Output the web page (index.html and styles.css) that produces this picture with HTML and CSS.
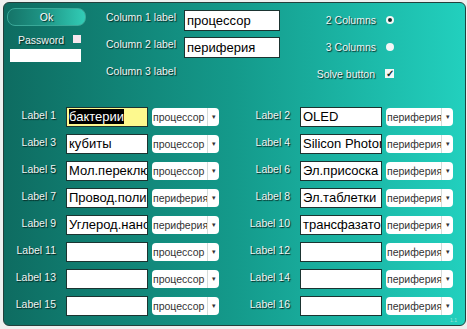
FILE: index.html
```html
<!DOCTYPE html>
<html lang="ru">
  <head>
    <meta charset="UTF-8" />
    <meta name="viewport" content="width=device-width, initial-scale=1.0" />
    <title>Solver</title>
    <link rel="stylesheet" href="styles.css">
  </head>
  <body>
    <div class="panel">
      <div class="top">
        <div class="auth">
          <button class="ok">Ok</button>
          <div class="pw-row">
            <span class="lbl">Password</span>
            <span class="pw-box"></span>
          </div>
          <div class="pw-field"></div>
        </div>

        <div class="columns">
          <div class="col-row">
            <span class="lbl">Column 1 label</span>
            <div class="field col-field">процессор</div>
          </div>
          <div class="col-row">
            <span class="lbl">Column 2 label</span>
            <div class="field col-field">периферия</div>
          </div>
          <div class="col-row">
            <span class="lbl">Column 3 label</span>
          </div>
        </div>

        <div class="options">
          <div class="opt">
            <span class="lbl">2 Columns</span>
            <span class="radio on"></span>
          </div>
          <div class="opt">
            <span class="lbl">3 Columns</span>
            <span class="radio"></span>
          </div>
          <div class="opt">
            <span class="lbl">Solve button</span>
            <span class="check">&#10003;</span>
          </div>
        </div>
      </div>

      <div class="grid">
        <div class="row"><span class="lbl">Label 1</span><div class="field hl"><span class="sel">бактерии</span></div><div class="combo"><span class="combo-text">процессор</span><span class="arrow">&#9662;</span></div></div>
        <div class="row"><span class="lbl">Label 2</span><div class="field">OLED</div><div class="combo"><span class="combo-text">периферия</span><span class="arrow">&#9662;</span></div></div>
        <div class="row"><span class="lbl">Label 3</span><div class="field">кубиты</div><div class="combo"><span class="combo-text">процессор</span><span class="arrow">&#9662;</span></div></div>
        <div class="row"><span class="lbl">Label 4</span><div class="field">Silicon Photonics</div><div class="combo"><span class="combo-text">периферия</span><span class="arrow">&#9662;</span></div></div>
        <div class="row"><span class="lbl">Label 5</span><div class="field">Мол.переключатель</div><div class="combo"><span class="combo-text">процессор</span><span class="arrow">&#9662;</span></div></div>
        <div class="row"><span class="lbl">Label 6</span><div class="field">Эл.присоска</div><div class="combo"><span class="combo-text">периферия</span><span class="arrow">&#9662;</span></div></div>
        <div class="row"><span class="lbl">Label 7</span><div class="field">Провод.полимер</div><div class="combo"><span class="combo-text">периферия</span><span class="arrow">&#9662;</span></div></div>
        <div class="row"><span class="lbl">Label 8</span><div class="field">Эл.таблетки</div><div class="combo"><span class="combo-text">периферия</span><span class="arrow">&#9662;</span></div></div>
        <div class="row"><span class="lbl">Label 9</span><div class="field">Углерод.нанотрубки</div><div class="combo"><span class="combo-text">периферия</span><span class="arrow">&#9662;</span></div></div>
        <div class="row"><span class="lbl">Label 10</span><div class="field">трансфазатор</div><div class="combo"><span class="combo-text">периферия</span><span class="arrow">&#9662;</span></div></div>
        <div class="row"><span class="lbl">Label 11</span><div class="field"></div><div class="combo"><span class="combo-text">процессор</span><span class="arrow">&#9662;</span></div></div>
        <div class="row"><span class="lbl">Label 12</span><div class="field"></div><div class="combo"><span class="combo-text">периферия</span><span class="arrow">&#9662;</span></div></div>
        <div class="row"><span class="lbl">Label 13</span><div class="field"></div><div class="combo"><span class="combo-text">процессор</span><span class="arrow">&#9662;</span></div></div>
        <div class="row"><span class="lbl">Label 14</span><div class="field"></div><div class="combo"><span class="combo-text">периферия</span><span class="arrow">&#9662;</span></div></div>
        <div class="row"><span class="lbl">Label 15</span><div class="field"></div><div class="combo"><span class="combo-text">процессор</span><span class="arrow">&#9662;</span></div></div>
        <div class="row"><span class="lbl">Label 16</span><div class="field"></div><div class="combo"><span class="combo-text">периферия</span><span class="arrow">&#9662;</span></div></div>
      </div>

      <div class="ver">1.1</div>
    </div>
  </body>
</html>
```

FILE: styles.css
```css
body {
  margin: 0;
  background-color: #eef0ef;
  font-family: "Liberation Sans", Arial, sans-serif;
}
.panel {
  box-sizing: border-box;
  width: 463px;
  height: 324px;
  margin: 2px 0 0 3px;
  border: 1px solid #24403c;
  border-radius: 6px;
  background: linear-gradient(90deg, #0e6c61 0%, #149a8b 50%, #22d0be 100%);
  display: flex;
  flex-direction: column;
}
.lbl {
  color: #eef6f4;
  font-size: 10.5px;
  line-height: 16px;
  text-shadow: 1px 1px 1px #06241f;
  white-space: nowrap;
}
.top {
  box-sizing: border-box;
  height: 104px;
  padding: 5px 0 0 3px;
  display: flex;
  align-items: flex-start;
}
.auth {
  width: 79px;
  display: flex;
  flex-direction: column;
}
.ok {
  height: 18px;
  padding: 0;
  border: 1px solid #3aa898;
  border-radius: 8px;
  background: linear-gradient(90deg, #157468 0%, #1f9888 50%, #32ccb6 100%);
  color: #ffffff;
  font-family: "Liberation Sans", Arial, sans-serif;
  font-size: 10.5px;
  line-height: 14px;
  text-shadow: 1px 1px 1px #06241f;
}
.pw-row {
  margin-top: 6px;
  padding-left: 11px;
  display: flex;
  align-items: center;
  gap: 9px;
}
.pw-box {
  width: 8px;
  height: 8px;
  margin-top: -3px;
  background-color: #f6e6ee;
}
.pw-field {
  margin: 1px 0 0 3px;
  width: 71px;
  height: 13px;
  background-color: #ffffff;
}
.columns {
  margin: 2px 0 0 20px;
  display: flex;
  flex-direction: column;
  gap: 6px;
}
.col-row {
  height: 21px;
  display: flex;
  align-items: flex-start;
  gap: 8px;
}
.col-row .lbl {
  margin-top: -1px;
}
.field {
  box-sizing: border-box;
  width: 82px;
  height: 20px;
  padding: 0 2px;
  border: 1px solid #1b3431;
  background-color: #ffffff;
  color: #000000;
  font-size: 13px;
  line-height: 18px;
  white-space: nowrap;
  overflow: hidden;
}
.col-field {
  width: 96px;
  height: 21px;
  line-height: 19px;
}
.field.hl {
  background-color: #fdf98e;
}
.sel {
  background-color: #000000;
  color: #ffffff;
}
.options {
  margin: 3px 0 0 25px;
  width: 89px;
  display: flex;
  flex-direction: column;
  gap: 10px;
}
.opt {
  height: 17px;
  display: flex;
  align-items: center;
  justify-content: flex-end;
  gap: 10px;
}
.radio {
  box-sizing: border-box;
  width: 8px;
  height: 8px;
  border-radius: 50%;
  background-color: #f4f6f6;
}
.radio.on {
  border: 2.5px solid #f4f6f6;
  background-color: #10302c;
}
.check {
  width: 9px;
  height: 9px;
  background-color: #f4f6f6;
  color: #10302c;
  font-size: 10px;
  line-height: 9px;
  font-weight: bold;
  text-align: center;
}
.grid {
  display: grid;
  grid-template-columns: 215px 215px;
  column-gap: 19px;
  row-gap: 7px;
}
.row {
  height: 20px;
  display: flex;
  align-items: flex-start;
}
.row .lbl {
  width: 52px;
  margin-right: 10px;
  text-align: right;
}
.combo {
  box-sizing: border-box;
  width: 67px;
  height: 18px;
  margin: 1px 0 0 4px;
  border-radius: 4px;
  background-color: #ffffff;
  display: flex;
  overflow: hidden;
}
.combo-text {
  flex: 1;
  padding-left: 1px;
  color: #333333;
  font-size: 10.5px;
  line-height: 18px;
  white-space: nowrap;
  overflow: hidden;
}
.arrow {
  width: 11px;
  border-left: 1px solid #d4dcda;
  color: #333333;
  font-size: 7px;
  line-height: 18px;
  text-align: center;
}
.ver {
  margin-top: auto;
  padding: 0 8px 2px 0;
  text-align: right;
  color: #9fe4d8;
  font-size: 5px;
}
```
